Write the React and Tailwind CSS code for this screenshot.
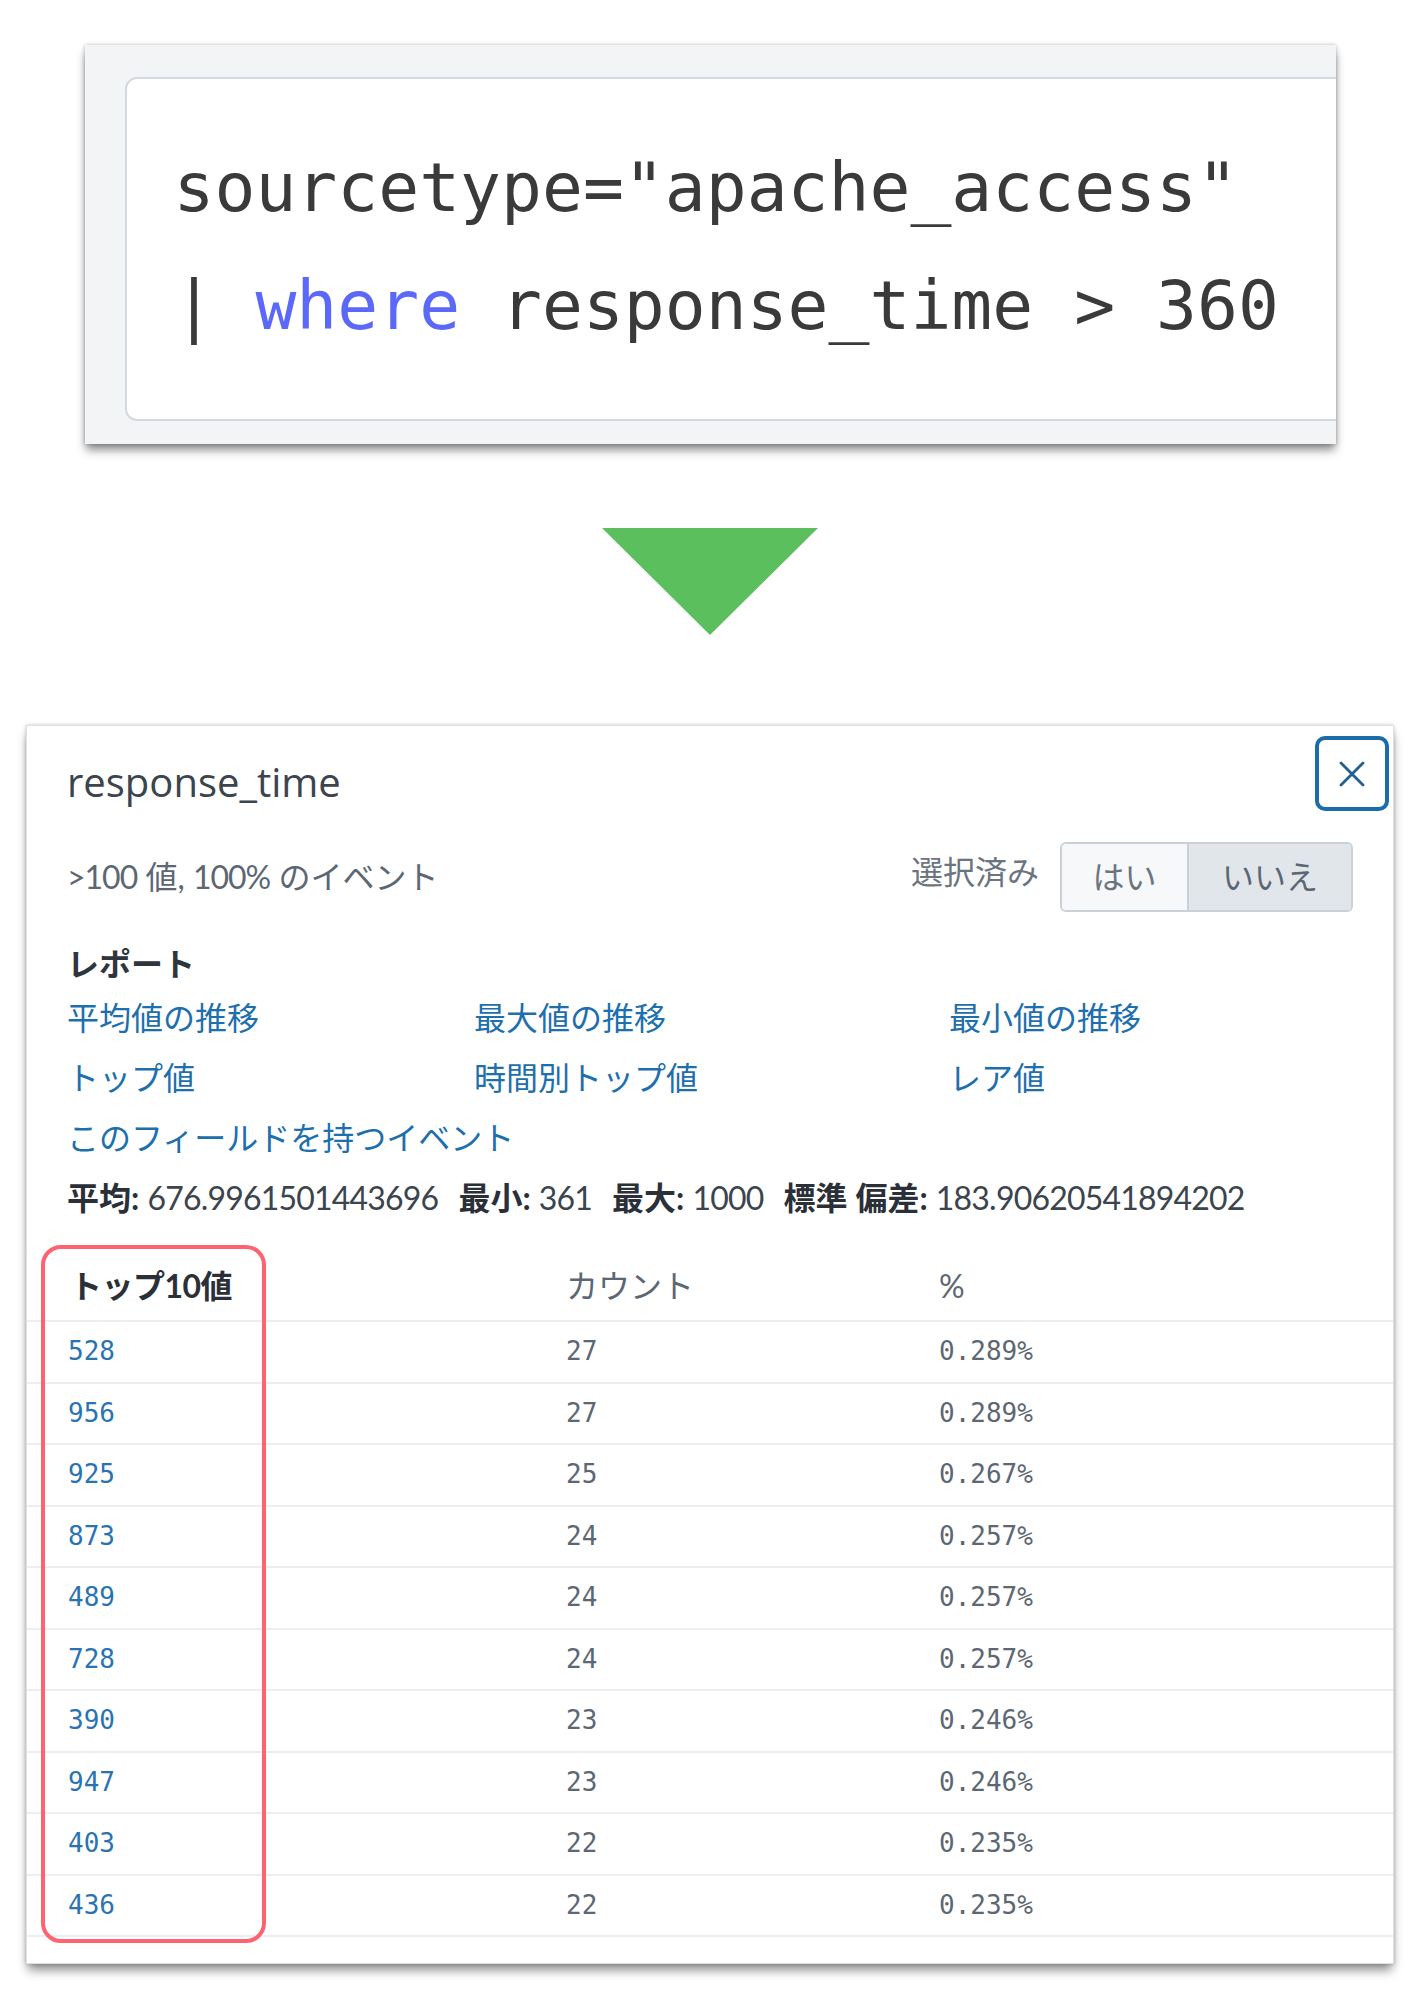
import React from "react";

const rows = [
  ["528", "27", "0.289%"],
  ["956", "27", "0.289%"],
  ["925", "25", "0.267%"],
  ["873", "24", "0.257%"],
  ["489", "24", "0.257%"],
  ["728", "24", "0.257%"],
  ["390", "23", "0.246%"],
  ["947", "23", "0.246%"],
  ["403", "22", "0.235%"],
  ["436", "22", "0.235%"],
];

const sans = "font-['Lato','Noto_Sans_CJK_JP',sans-serif]";
const mono = "font-['DejaVu_Sans_Mono','Liberation_Mono',monospace]";

export default function App() {
  return (
    <div className={`w-[1420px] min-h-[2000px] bg-white flex flex-col items-center ${sans}`}>
      {/* code screenshot card */}
      <div className="mt-[45px] w-[1251px] h-[399px] bg-[#f3f4f6] overflow-hidden shadow-[0_7px_9px_-1px_rgba(0,0,0,0.45),0_0_4px_rgba(0,0,0,0.25)] pl-[40px] pt-[32px]">
        <div className="w-[1300px] h-[344px] bg-white border-2 border-[#d3d9e0] rounded-[12px] pl-[47px] pt-[50px]">
          <div className={`${mono} text-[68px] leading-[118px] text-[#3a3a3a] whitespace-pre`}>
            <div>sourcetype="apache_access"</div>
            <div>
              | <span className="text-[#5b68f8]">where</span> response_time &gt; 360
            </div>
          </div>
        </div>
      </div>

      {/* arrow */}
      <svg className="mt-[84px]" width="216" height="107" viewBox="0 0 216 107">
        <polygon points="0,0 216,0 108,107" fill="#5cbf5e" />
      </svg>

      {/* field panel */}
      <div className="relative mt-[90px] w-[1368px] bg-white border border-[#dde1e6] shadow-[0_8px_10px_-2px_rgba(0,0,0,0.45),0_0_4px_rgba(0,0,0,0.2)] pb-[26px]">
        <button className="absolute right-[4px] top-[10px] w-[74px] h-[75px] rounded-[10px] border-[4px] border-[#1b6ca8] bg-white flex items-center justify-center">
          <svg width="28" height="28" viewBox="0 0 28 28">
            <path d="M3 3 L25 25 M25 3 L3 25" stroke="#1f5f93" strokeWidth="2.8" strokeLinecap="round" />
          </svg>
        </button>

        <div className="px-[40px]">
          <div className="mt-[32px] h-[48px] flex items-center text-[40px] text-[#3c444d] font-['Open_Sans','Lato',sans-serif]">response_time</div>

          <div className="mt-[36px] h-[70px] flex items-center justify-between">
            <div className="text-[32px] text-[#5c6773]">
              <span className="tracking-[-1px]">&gt;100</span> 値, <span className="tracking-[-1px]">100%</span> のイベント
            </div>
            <div className="flex items-center">
              <span className="text-[32px] text-[#6b7580] mr-[21px] -mt-[10px]">選択済み</span>
              <div className="flex h-[70px] rounded-[6px] border-2 border-[#c9d0d8] overflow-hidden text-[32px]">
                <div className="w-[127px] bg-[#f7f8fa] flex items-center justify-center text-[#6b7580] border-r-2 border-[#c9d0d8]">はい</div>
                <div className="w-[162px] bg-[#e1e6eb] flex items-center justify-center text-[#5c6773]">いいえ</div>
              </div>
            </div>
          </div>

          <div className="mt-[28px] h-[48px] flex items-center text-[32px] font-bold text-[#2f353c]">レポート</div>

          <div className="grid grid-cols-[407px_475px_1fr] text-[32px] text-[#1d6fad] leading-[60px]">
            <div>平均値の推移</div>
            <div>最大値の推移</div>
            <div>最小値の推移</div>
            <div>トップ値</div>
            <div>時間別トップ値</div>
            <div>レア値</div>
            <div className="col-span-3">このフィールドを持つイベント</div>
          </div>

          <div className="h-[60px] flex items-center text-[32px] text-[#3c444d] gap-[20px]">
            <span>
              <b className="text-[#2b3038]">平均:</b> <span className="tracking-[-0.8px]">676.9961501443696</span>
            </span>
            <span>
              <b className="text-[#2b3038]">最小:</b> <span className="tracking-[-0.8px]">361</span>
            </span>
            <span>
              <b className="text-[#2b3038]">最大:</b> <span className="tracking-[-0.8px]">1000</span>
            </span>
            <span>
              <b className="text-[#2b3038]">標準 偏差:</b> <span className="tracking-[-0.8px]">183.90620541894202</span>
            </span>
          </div>
        </div>

        {/* table */}
        <div className="relative mt-[24px]">
          <div className="grid grid-cols-[539px_373px_1fr] h-[70px] items-end pb-[14px] border-b-2 border-[#eceff2] text-[32px] leading-[40px]">
            <div className="pl-[43px] font-bold text-[#2b3038] tracking-[-0.5px]">トップ10値</div>
            <div className="text-[#5c6773]">カウント</div>
            <div className="text-[#5c6773]">%</div>
          </div>
          {rows.map((r) => (
            <div key={r[0]} className={`grid grid-cols-[539px_373px_1fr] h-[61.5px] items-center border-b-2 border-[#eceff2] ${mono} text-[26px]`}>
              <div className="pl-[41px] text-[#2a73b3]">{r[0]}</div>
              <div className="text-[#5c6773]">{r[1]}</div>
              <div className="text-[#5c6773]">{r[2]}</div>
            </div>
          ))}
          <div className="absolute left-[14px] top-[-7px] w-[225px] h-[698px] rounded-[20px] border-[4px] border-[#fd6471] pointer-events-none" />
        </div>
      </div>
    </div>
  );
}
